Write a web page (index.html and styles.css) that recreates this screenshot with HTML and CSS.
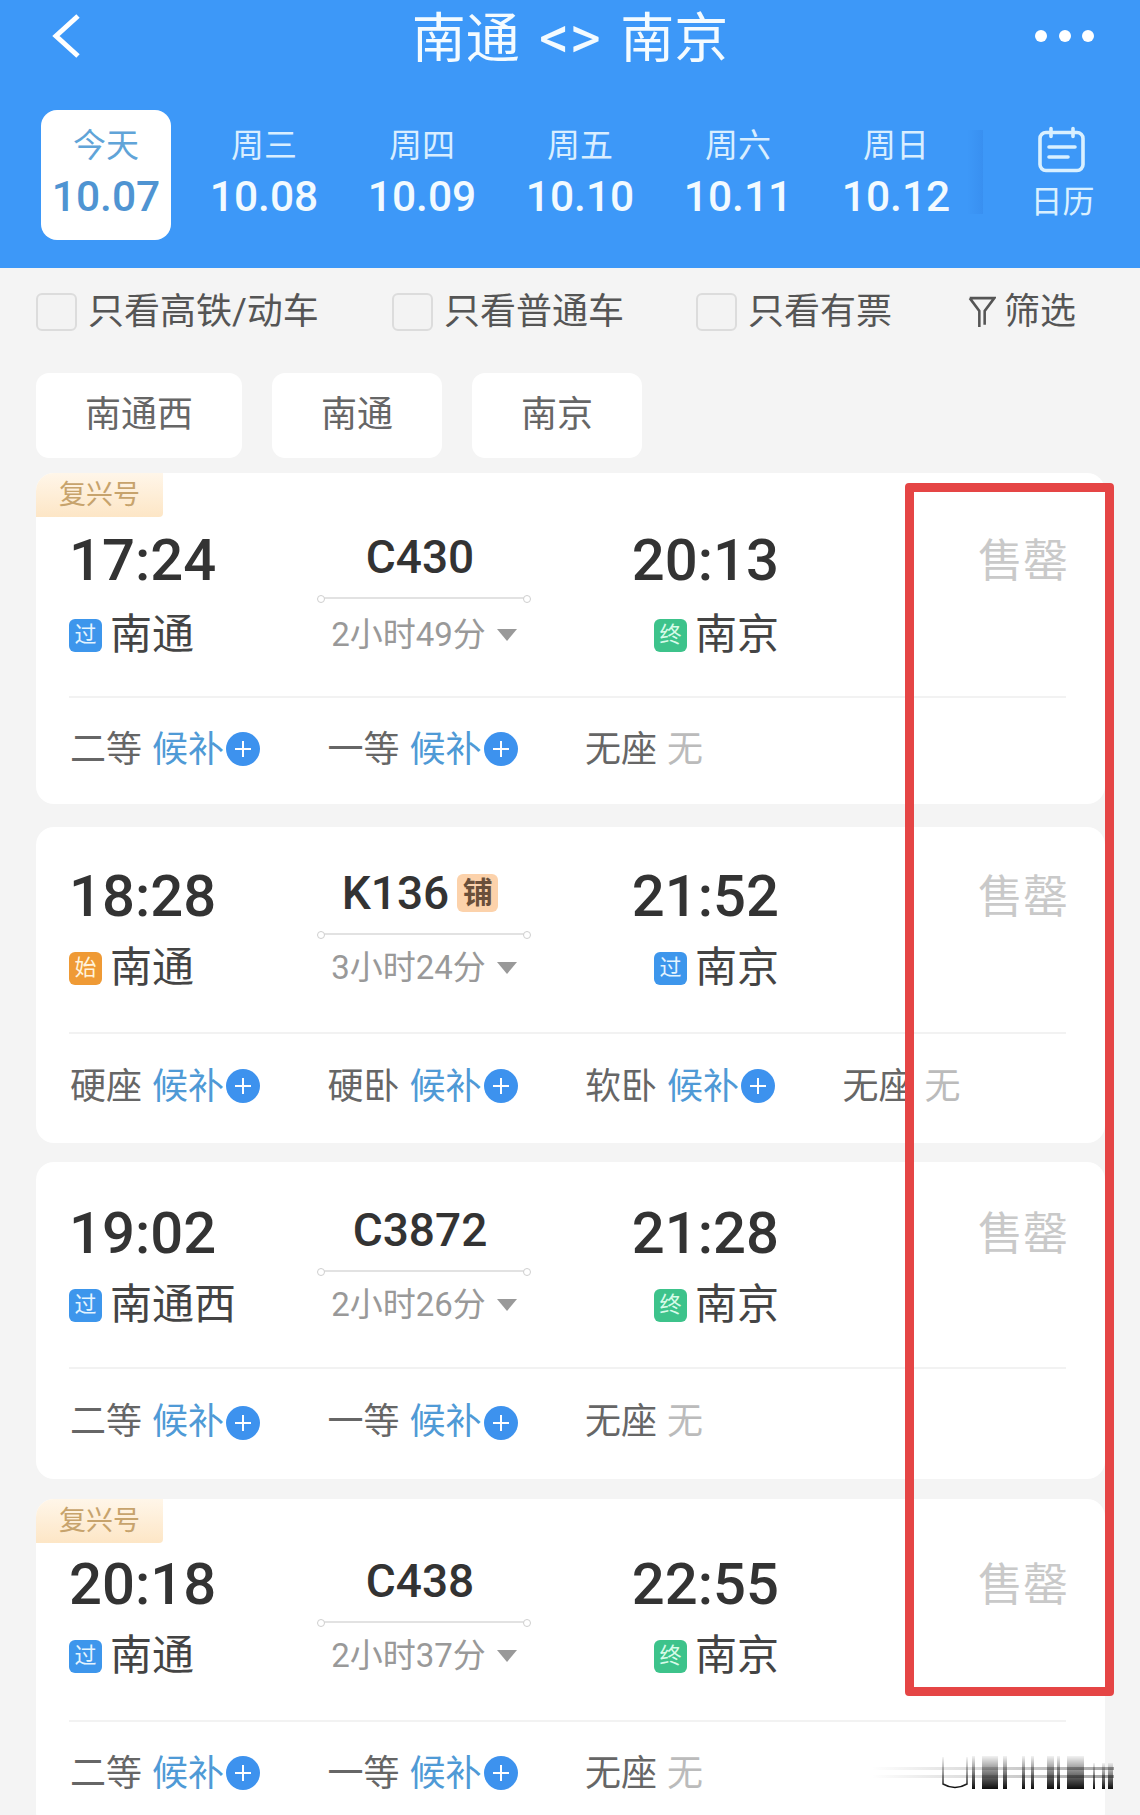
FILE: index.html
```html
<!DOCTYPE html>
<html lang="zh-CN">
<head>
<meta charset="utf-8">
<title>南通 &lt;&gt; 南京</title>
<link rel="stylesheet" href="styles.css">
</head>
<body>
<div class="page">
  <header class="header">
    <div class="nav">
      <svg class="back" viewBox="0 0 30 46" width="30" height="46"><path d="M26 3 4 23l22 20" fill="none" stroke="#fff" stroke-width="5"/></svg>
      <div class="title">南通 <span class="arrows">&lt;&gt;</span> 南京</div>
      <div class="dots"><i></i><i></i><i></i></div>
    </div>
    <div class="dates">
      <div class="tab active"><div class="tab-box"><div class="day">今天</div><div class="date">10.07</div></div></div>
      <div class="tab"><div class="tab-box"><div class="day">周三</div><div class="date">10.08</div></div></div>
      <div class="tab"><div class="tab-box"><div class="day">周四</div><div class="date">10.09</div></div></div>
      <div class="tab"><div class="tab-box"><div class="day">周五</div><div class="date">10.10</div></div></div>
      <div class="tab"><div class="tab-box"><div class="day">周六</div><div class="date">10.11</div></div></div>
      <div class="tab"><div class="tab-box"><div class="day">周日</div><div class="date">10.12</div></div></div>
      <div class="cal">
        <svg viewBox="0 0 52 48" width="52" height="48"><g fill="none" stroke="#d9f0ff" stroke-width="3.6" stroke-linecap="round"><rect x="3" y="6.5" width="43" height="38" rx="6"/><path d="M14 2.5v8M36 2.500v8M12 21h26M12 31h19"/></g></svg>
        <div class="cal-text">日历</div>
      </div>
    </div>
  </header>

  <div class="filters">
    <div class="filter"><span class="check"></span><span>只看高铁/动车</span></div>
    <div class="filter"><span class="check"></span><span>只看普通车</span></div>
    <div class="filter"><span class="check"></span><span>只看有票</span></div>
    <div class="filter funnel-item">
      <svg viewBox="0 0 26 30" width="28" height="32"><path d="M1.500 2h23L15.500 14v13M1.500 2l9 12v15" fill="none" stroke="#555" stroke-width="2.400"/></svg>
      <span>筛选</span>
    </div>
  </div>

  <div class="chips">
    <div class="chip">南通西</div>
    <div class="chip">南通</div>
    <div class="chip">南京</div>
  </div>

  <section class="card card-1">
    <div class="badge">复兴号</div>
    <div class="trip">
      <div class="col"><div class="time">17:24</div><div class="station"><span class="tag pass">过</span>南通</div></div>
      <div class="col mid"><div class="train">C430</div><div class="rail"></div><div class="dur">2小时49分<span class="tri"></span></div></div>
      <div class="col end"><div class="time">20:13</div><div class="station"><span class="tag final">终</span>南京</div></div>
      <div class="sold">售罄</div>
    </div>
    <div class="seats">
      <div class="seat"><span>二等</span><span class="wait">候补</span><span class="plus"></span></div>
      <div class="seat"><span>一等</span><span class="wait">候补</span><span class="plus"></span></div>
      <div class="seat"><span>无座</span><span class="none">无</span></div>
    </div>
  </section>

  <section class="card card-2">
    <div class="trip">
      <div class="col"><div class="time">18:28</div><div class="station"><span class="tag start">始</span>南通</div></div>
      <div class="col mid"><div class="train">K136<span class="berth">铺</span></div><div class="rail"></div><div class="dur">3小时24分<span class="tri"></span></div></div>
      <div class="col end"><div class="time">21:52</div><div class="station"><span class="tag pass">过</span>南京</div></div>
      <div class="sold">售罄</div>
    </div>
    <div class="seats">
      <div class="seat"><span>硬座</span><span class="wait">候补</span><span class="plus"></span></div>
      <div class="seat"><span>硬卧</span><span class="wait">候补</span><span class="plus"></span></div>
      <div class="seat"><span>软卧</span><span class="wait">候补</span><span class="plus"></span></div>
      <div class="seat"><span>无座</span><span class="none">无</span></div>
    </div>
  </section>

  <section class="card card-3">
    <div class="trip">
      <div class="col"><div class="time">19:02</div><div class="station"><span class="tag pass">过</span>南通西</div></div>
      <div class="col mid"><div class="train">C3872</div><div class="rail"></div><div class="dur">2小时26分<span class="tri"></span></div></div>
      <div class="col end"><div class="time">21:28</div><div class="station"><span class="tag final">终</span>南京</div></div>
      <div class="sold">售罄</div>
    </div>
    <div class="seats">
      <div class="seat"><span>二等</span><span class="wait">候补</span><span class="plus"></span></div>
      <div class="seat"><span>一等</span><span class="wait">候补</span><span class="plus"></span></div>
      <div class="seat"><span>无座</span><span class="none">无</span></div>
    </div>
  </section>

  <section class="card card-4">
    <div class="badge">复兴号</div>
    <div class="trip">
      <div class="col"><div class="time">20:18</div><div class="station"><span class="tag pass">过</span>南通</div></div>
      <div class="col mid"><div class="train">C438</div><div class="rail"></div><div class="dur">2小时37分<span class="tri"></span></div></div>
      <div class="col end"><div class="time">22:55</div><div class="station"><span class="tag final">终</span>南京</div></div>
      <div class="sold">售罄</div>
    </div>
    <div class="seats">
      <div class="seat"><span>二等</span><span class="wait">候补</span><span class="plus"></span></div>
      <div class="seat"><span>一等</span><span class="wait">候补</span><span class="plus"></span></div>
      <div class="seat"><span>无座</span><span class="none">无</span></div>
    </div>
  </section>

  <div class="highlight"></div>

  <svg class="smear" viewBox="0 0 242 36" width="242" height="36">
    <defs>
      <linearGradient id="fade" x1="0" y1="0" x2="0" y2="1">
        <stop offset="0" stop-color="#000" stop-opacity=".05"/>
        <stop offset=".55" stop-color="#000" stop-opacity=".55"/>
        <stop offset="1" stop-color="#000" stop-opacity=".95"/>
      </linearGradient>
      <linearGradient id="band" x1="0" y1="0" x2="1" y2="0">
        <stop offset="0" stop-color="#888" stop-opacity="0"/>
        <stop offset=".3" stop-color="#888" stop-opacity=".22"/>
        <stop offset="1" stop-color="#555" stop-opacity=".55"/>
      </linearGradient>
    </defs>
    <rect x="0" y="12" width="242" height="3" fill="url(#band)"/>
    <rect x="0" y="20" width="242" height="3" fill="url(#band)"/>
    <path d="M71 2v27q12 7 24 0V2" fill="none" stroke="url(#fade)" stroke-width="1.500"/>
    <g fill="url(#fade)">
      <rect x="100" y="1" width="3" height="33"/>
      <rect x="110" y="1" width="16" height="33"/>
      <rect x="131" y="1" width="4" height="33"/>
      <rect x="150" y="1" width="3" height="33"/>
      <rect x="159" y="1" width="3" height="33"/>
      <rect x="175" y="1" width="7" height="33"/>
      <rect x="185" y="1" width="3" height="33"/>
      <rect x="195" y="1" width="17" height="33"/>
      <rect x="221" y="8" width="2" height="26"/>
      <rect x="230" y="8" width="3" height="26"/>
      <rect x="236" y="8" width="5" height="26"/>
    </g>
  </svg>
</div>
</body>
</html>
```

FILE: styles.css
```css
* { box-sizing: border-box; }

html, body {
  margin: 0;
  padding: 0;
  background: #f4f4f4;
}

.page {
  position: relative;
  width: 1140px;
  height: 1815px;
  overflow: hidden;
  background: #f4f4f4;
  font-family: Roboto, "Noto Sans CJK SC", sans-serif;
  color: #555;
}

/* Header */
.header {
  height: 268px;
  background: #3d98f8;
  color: #fff;
}

.nav {
  display: grid;
  grid-template-columns: 1fr auto 1fr;
  align-items: center;
  height: 74px;
  padding: 0 46px;
}

.back {
  display: block;
  margin-left: 6px;
  margin-top: -2px;
}

.title {
  height: 74px;
  font-size: 54px;
  line-height: 75px;
  color: #f4fbff;
  word-spacing: 6px;
  white-space: nowrap;
}

.arrows {
  font-size: 60px;
  letter-spacing: 0;
}

.dots {
  display: flex;
  justify-content: flex-end;
  gap: 11.500px;
  margin-top: -3px;
}

.dots i {
  width: 12px;
  height: 12px;
  border-radius: 50%;
  background: #fff;
}

.dates {
  display: flex;
  margin-top: 36px;
  padding-left: 27px;
}

.tab {
  width: 158px;
  padding: 0 14px;
  text-align: center;
  flex: none;
}

.tab-box {
  height: 130px;
  padding-top: 16px;
  border-radius: 16px;
}

.day {
  font-size: 33px;
  line-height: 40px;
  color: #d9eeff;
}

.date {
  margin: 6px -10px 0;
  font-size: 42.500px;
  line-height: 50px;
  font-weight: 500;
  white-space: nowrap;
  color: #f2faff;
}

.active .tab-box { background: #fff; }
.active .day { color: #60a4d8; }
.active .date { color: #4f94d2; }

.cal {
  position: relative;
  flex: 1;
  padding: 16px 0 0 10px;
  text-align: center;
}

.cal svg { display: block; margin: 0 auto; }

.cal::before {
  content: "";
  position: absolute;
  left: -8px;
  top: 20px;
  width: 16px;
  height: 84px;
  background: linear-gradient(to right, rgba(40, 110, 210, 0), rgba(40, 110, 210, .2));
}

.cal-text {
  margin-top: 6px;
  font-size: 32px;
  line-height: 44px;
  color: #d9f0ff;
}

/* Filters */
.filters {
  display: grid;
  grid-template-columns: 356px 304px 273px auto;
  align-items: center;
  height: 38px;
  margin-top: 25px;
  padding-left: 36px;
  font-size: 36px;
  line-height: 38px;
  color: #555;
  white-space: nowrap;
}

.filter {
  display: flex;
  align-items: center;
}

.check {
  flex: none;
  width: 41px;
  height: 38px;
  margin-right: 11px;
  border: 2px solid #dcdcdc;
  border-radius: 6px;
  background: #f3f3f3;
}

.funnel-item svg { margin: 0 8px 0 -1px; }

/* Station chips */
.chips {
  display: flex;
  gap: 30px;
  margin-top: 42px;
  padding-left: 36px;
}

.chip {
  height: 85px;
  padding: 0 49px;
  border-radius: 13px;
  background: #fff;
  font-size: 36px;
  line-height: 84px;
  color: #666;
}

/* Cards */
.card {
  position: relative;
  width: 1069px;
  margin-left: 36px;
  margin-top: var(--mt);
  padding: 0 39px var(--cb) 33px;
  border-radius: 18px;
  background: #fff;
}

.card-1 { --mt: 15px; --pt: 57px; --sg: 25px; --pb: 41px; --st: 32px; --cb: 34px; }
.card-2 { --mt: 23px; --pt: 39px; --sg: 22px; --pb: 44px; --st: 33px; --cb: 36px; }
.card-3 { --mt: 19px; --pt: 41px; --sg: 22px; --pb: 42px; --st: 33px; --cb: 37px; }
.card-4 { --mt: 20px; --pt: 55px; --sg: 22px; --pb: 44px; --st: 32px; --cb: 36px; }

.badge {
  position: absolute;
  left: 0;
  top: 0;
  width: 127px;
  height: 44px;
  border-radius: 18px 0 4px 0;
  background: linear-gradient(#fff6e9, #fde6c6);
  font-size: 27px;
  line-height: 44px;
  text-align: center;
  color: #c7a36c;
}

.trip {
  display: grid;
  grid-template-columns: 250px 210px 250px 1fr;
  padding-top: var(--pt);
  padding-bottom: var(--pb);
}

.col {
  display: flex;
  flex-direction: column;
  height: calc(100px + var(--sg));
}

.end { align-items: flex-end; }

.time {
  height: 60px;
  font-size: 58px;
  line-height: 60px;
  font-weight: 500;
  color: #333;
}

.station {
  display: flex;
  align-items: center;
  margin-top: auto;
  height: 40px;
  font-size: 42px;
  line-height: 40px;
  color: #444;
}

.tag {
  flex: none;
  width: 33px;
  height: 33px;
  margin-right: 8px;
  border-radius: 6px;
  font-size: 22px;
  line-height: 32px;
  text-align: center;
  color: #e4f4ff;
}

.pass { background: #3d96ec; }
.start { background: #ef9a35; color: #fff3dc; }
.final { background: #3dc38b; color: #d8fbe9; }

.mid { align-items: center; }

.train {
  display: flex;
  align-items: center;
  justify-content: center;
  height: 56px;
  margin: -1px 8px 0 0;
  font-size: 46px;
  line-height: 56px;
  font-weight: 500;
  color: #333;
}

.berth {
  width: 41px;
  height: 38px;
  margin-left: 8px;
  border-radius: 6px;
  background: #fcd2ab;
  font-size: 30px;
  line-height: 37px;
  font-weight: 700;
  text-align: center;
  color: #6a4f3a;
}

.rail {
  position: relative;
  width: 210px;
  height: 2px;
  margin-top: 12px;
  background: #e2e2e2;
}

.rail::before,
.rail::after {
  content: "";
  position: absolute;
  top: -2px;
  width: 6px;
  height: 6px;
  border: 1px solid #cfcfcf;
  border-radius: 50%;
  background: #fff;
}

.rail::before { left: -2px; }
.rail::after { right: -2px; }

.dur {
  display: flex;
  align-items: center;
  margin-top: auto;
  height: 40px;
  font-size: 33px;
  line-height: 40px;
  color: #999;
  white-space: nowrap;
}

.tri {
  width: 0;
  height: 0;
  margin-left: 11px;
  border-left: 10px solid transparent;
  border-right: 10px solid transparent;
  border-top: 12px solid #999;
}

.sold {
  margin-right: -2px;
  font-size: 45px;
  line-height: 64px;
  text-align: right;
  color: #c9c9c9;
}

.seats {
  display: grid;
  grid-template-columns: repeat(4, 257.500px);
  padding-top: var(--st);
  border-top: 2px solid #f2f2f2;
  font-size: 36px;
  line-height: 40px;
  color: #666;
}

.seat {
  display: flex;
  align-items: center;
  gap: 10px;
  padding-left: 1px;
  white-space: nowrap;
}

.wait { color: #4f9ad6; }
.none { color: #bbb; }

.plus {
  position: relative;
  flex: none;
  width: 34px;
  height: 34px;
  margin: -2px 0 0 -8px;
  border-radius: 50%;
  background: #3d92ee;
}

.card-3 .plus { margin-top: 2px; }

.plus::before,
.plus::after {
  content: "";
  position: absolute;
  background: #fff;
}

.plus::before { left: 9px; right: 9px; top: 16px; height: 2px; }
.plus::after { top: 9px; bottom: 9px; left: 16px; width: 2px; }

/* Annotation over the screenshot */
.highlight {
  position: absolute;
  left: 904.500px;
  top: 483px;
  width: 209.500px;
  height: 1213px;
  border: 9.500px solid #e54545;
  border-radius: 4px;
}

.smear {
  position: absolute;
  left: 872px;
  top: 1755px;
}
```
